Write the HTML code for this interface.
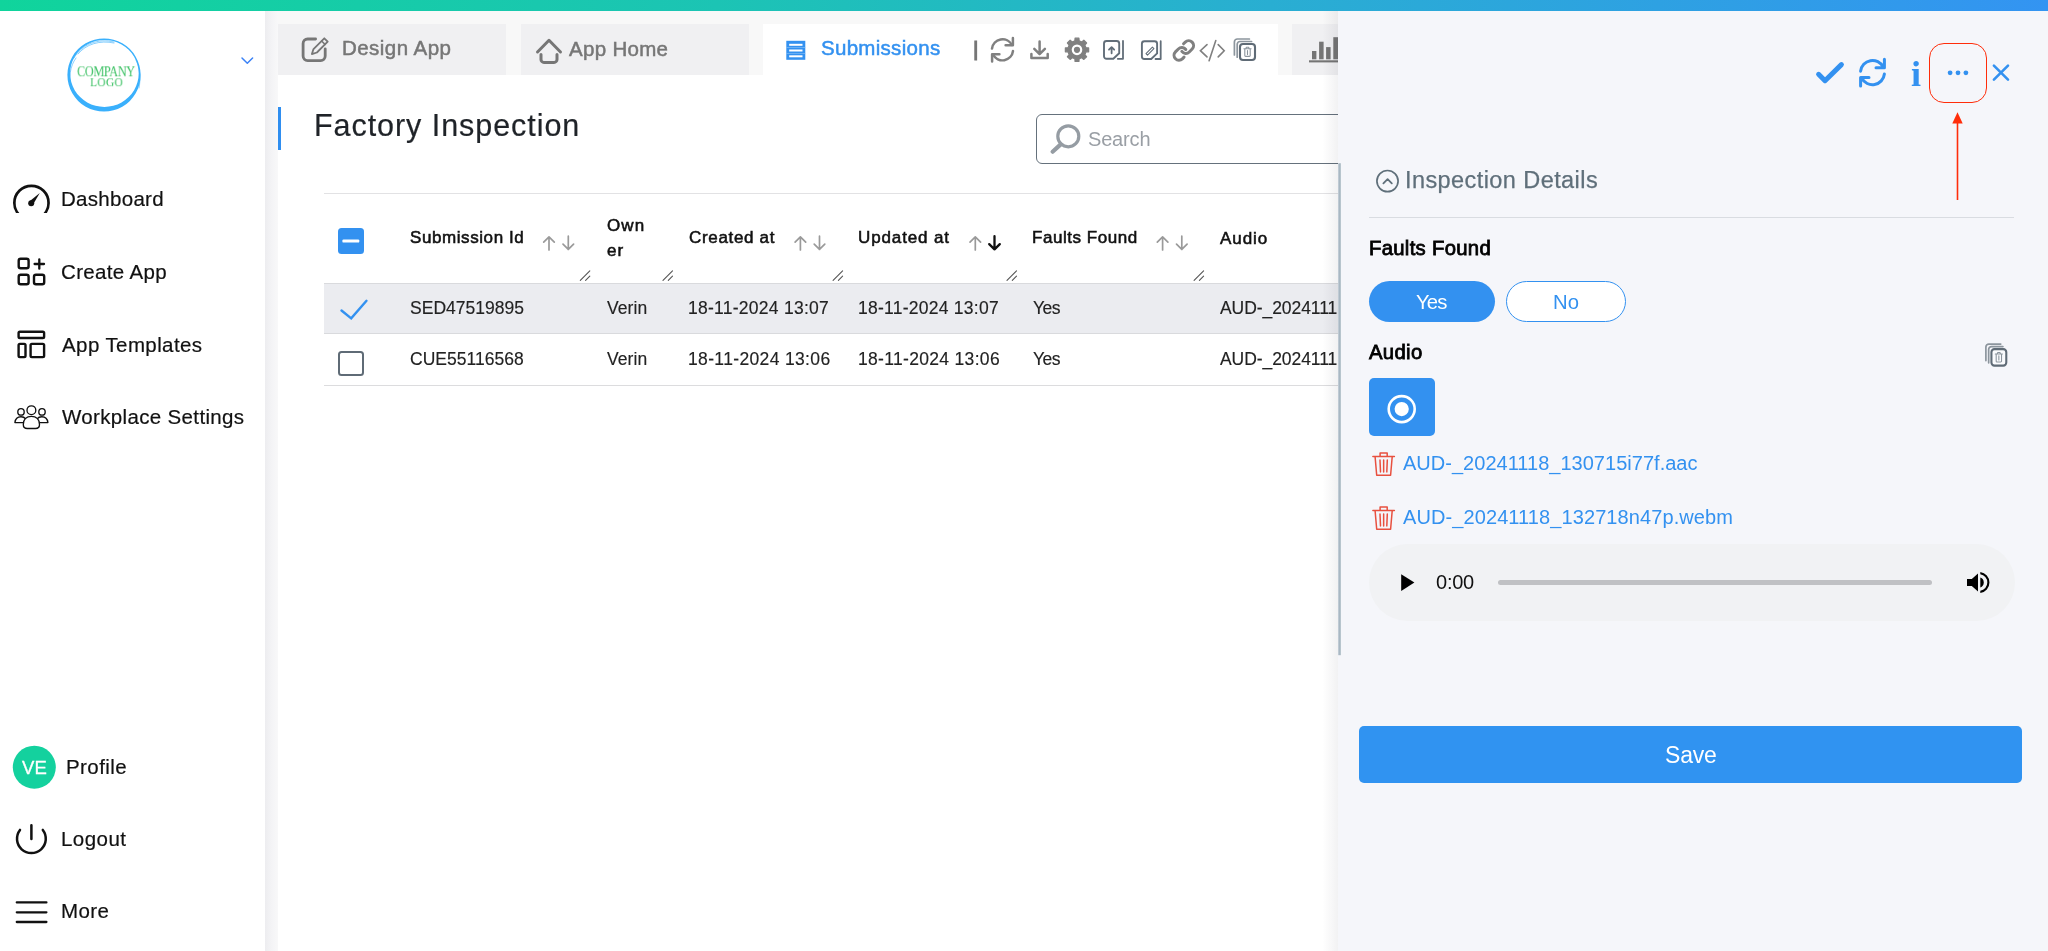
<!DOCTYPE html>
<html lang="en">
<head>
<meta charset="utf-8">
<title>Factory Inspection - Submissions</title>
<style>
html,body{margin:0;padding:0;}
body{width:2048px;height:951px;overflow:hidden;position:relative;background:#ffffff;font-family:"Liberation Sans",Arial,Helvetica,sans-serif;}
.abs{position:absolute;}
.t{position:absolute;white-space:nowrap;line-height:1;will-change:transform;}
svg.ov{position:absolute;left:0;top:0;width:2048px;height:951px;overflow:visible;}
#topbar{left:0;top:0;width:2048px;height:11px;background:linear-gradient(90deg,#10d49c 0%,#1cc4b4 35%,#29aed2 62%,#3394f2 100%);z-index:50;}
#sidebar{left:0;top:11px;width:265px;height:940px;background:#ffffff;}
#gutter{left:265px;top:11px;width:13px;height:940px;background:linear-gradient(90deg,#ededf0 0%,#f4f4f6 55%,#f8f8f9 100%);}
#mainbg{left:278px;top:11px;width:1060px;height:64px;background:#f8f8f8;}
#mainwhite{left:278px;top:75px;width:1060px;height:876px;background:#ffffff;}
.tab{top:24px;height:51.3px;background:#f0f0f2;}
#panel{left:1338px;top:11px;width:710px;height:940px;background:#f5f6fa;overflow:hidden;}
#main{left:0;top:0;width:1338px;height:951px;overflow:hidden;}
</style>
</head>
<body>
<div class="abs" id="main">
<div class="abs" id="sidebar"></div>
<div class="abs" id="gutter"></div>
<div class="abs" id="mainbg"></div>
<div class="abs" id="mainwhite"></div>

<div class="abs tab" style="left:278px;width:228px;"></div>
<div class="abs tab" style="left:521px;width:228px;"></div>
<div class="abs tab" style="left:763px;width:515px;background:#ffffff;"></div>
<div class="abs tab" style="left:1292px;width:60px;"></div>
<div class="abs" style="left:278px;top:107px;width:3px;height:43px;background:#2f8ef0;"></div>
<div class="abs" style="left:324px;top:193px;width:1020px;height:1px;background:#e2e2e4;"></div>
<div class="abs" style="left:1036px;top:114px;width:400px;height:48px;border:1.1px solid #65717c;border-radius:6px;background:#fff;"></div>
<div class="abs" style="left:324px;top:283px;width:1020px;height:51px;background:#ebecf0;border-top:1px solid #d9dadd;border-bottom:1px solid #d9dadd;box-sizing:border-box;"></div>
<div class="abs" style="left:324px;top:385px;width:1020px;height:1px;background:#dcdcde;"></div>
<div class="abs" style="left:338px;top:228px;width:26px;height:26px;border-radius:3.5px;background:#3391f0;"></div>
<div class="abs" style="left:338.2px;top:351.2px;width:25.6px;height:25.2px;border-radius:3.5px;border:2.4px solid #5f6b76;box-sizing:border-box;background:#fff;"></div>
<svg class="ov" viewBox="0 0 2048 951" fill="none" stroke-linecap="round" stroke-linejoin="round">
<rect x="342.400" y="239.400" width="16.900" height="3.200" rx="1.200" fill="#fff" stroke="none"/>
<!-- logo -->
<g stroke="none">
<path fill="#3ab0fc" fill-rule="evenodd" d="M104 38.4a36.6 36.6 0 1 0 0.01 0Z M104.4 39.9a34.3 33.5 0 1 1 -0.01 0Z"/>
<path fill="none" stroke="#3ab0fc" stroke-width="0.6" d="M74 58c8-14 24-20 40-16M78 54c8-10 22-14 36-11M72 90c-4-12-2-24 4-32M136 60c4 8 5 18 3 28"/>
</g>
<polyline points="242,58 247.3,63.2 252.6,58" stroke="#3b82f6" stroke-width="1.5"/>
<!-- dashboard -->
<clipPath id="cpd"><rect x="10" y="180" width="44" height="33"/></clipPath>
<g clip-path="url(#cpd)"><circle cx="31.45" cy="202.9" r="17.1" stroke="#111" stroke-width="2.7"/></g>
<circle cx="31.2" cy="203.2" r="3" fill="#111" stroke="none"/>
<path d="M29.6 201.2L39.8 193 33 204.4Z" fill="#111" stroke="none"/>
<!-- create app -->
<g stroke="#111" stroke-width="2.4">
<rect x="18.7" y="258.7" width="9.9" height="9.6" rx="2"/>
<rect x="18.7" y="274.7" width="9.9" height="9.6" rx="2"/>
<rect x="34" y="274.7" width="10.2" height="9.6" rx="2"/>
<path d="M34.600 264.000H44.000M39.300 259.300V268.700" stroke-width="2.300"/>
</g>
<!-- app templates -->
<g stroke="#111" stroke-width="2.4">
<rect x="18.6" y="331.8" width="25.5" height="6.2" rx="1.3"/>
<rect x="18.6" y="343.9" width="6.9" height="13.2" rx="1.3"/>
<rect x="30.6" y="343.9" width="13.5" height="13.2" rx="1.3"/>
</g>
<!-- workplace settings -->
<g stroke="#111" stroke-width="1.35" fill="#fff">
<circle cx="21" cy="411.9" r="3.2"/>
<circle cx="42" cy="411.9" r="3.2"/>
<path d="M14.9 422.6c0.4-3.6 2.6-5.9 6.1-5.9 2 0 3.6 0.8 4.6 2.2l-1.6 3.7Z"/>
<path d="M47.9 422.6c-0.4-3.6-2.6-5.9-6.1-5.9-2 0-3.6 0.8-4.6 2.2l1.600 3.700Z"/>
<circle cx="31.4" cy="410.2" r="4.4"/>
<path d="M23.300 424.500c0-5 3.200-8.200 8.100-8.200s8.100 3.200 8.100 8.200c0 2.500-1.500 4-4 4h-8.200c-2.500 0-4-1.500-4-4Z"/>
</g>
<!-- profile -->
<circle cx="34.3" cy="767.2" r="21.5" fill="#14d19e" stroke="none"/>
<!-- logout -->
<path d="M20.000 829.900A14.400 14.400 0 1 0 42.800 829.900M31.400 825.300V839" stroke="#111" stroke-width="2.5"/>
<!-- more -->
<path d="M16.800 902.400H46.400M16.800 912.300H46.400M16.800 922H46.400" stroke="#111" stroke-width="2.3"/>

<!-- design app icon -->
<g stroke="#767676">
<path d="M315.600 39.000H307.600a4.500 4.500 0 0 0-4.500 4.500v12.600a4.500 4.500 0 0 0 4.500 4.500h13.100a4.500 4.500 0 0 0 4.500-4.500V48.800" stroke-width="2.800"/>
<path d="M324.300 38.300l3.400 3.400-10.800 10.800-5 1.600 1.600-5Z" stroke-width="1.800"/>
<path d="M321.600 41.000l3.400 3.400" stroke-width="1.500"/>
</g>
<!-- home icon -->
<path d="M537.500 52.000L549 40.300 560.500 52.000" stroke="#767676" stroke-width="3"/>
<path d="M541.000 54.500V59.400a3 3 0 0 0 3 3H554a3 3 0 0 0 3-3V54.500" stroke="#767676" stroke-width="3"/>
<!-- submissions icon -->
<g stroke="none">
<rect x="786.300" y="40.800" width="19" height="19" fill="#3391f0"/>
<rect x="789.200" y="43.800" width="13.300" height="2" fill="#fff"/>
<rect x="789.200" y="49.500" width="13.300" height="2" fill="#fff"/>
<rect x="789.200" y="55.300" width="13.300" height="2" fill="#fff"/>
<rect x="786.300" y="47.300" width="19" height="0.600" fill="#8cc3f7"/>
<rect x="786.300" y="53.100" width="19" height="0.600" fill="#8cc3f7"/>
</g>
<!-- refresh -->
<g stroke="#808080" stroke-width="2.500">
<path d="M992.000 48.600A10.600 10.600 0 0 1 1011.900 44.900"/>
<path d="M1012.900 38.000V45.300H1005.600"/>
<path d="M1013.000 51.000A10.600 10.600 0 0 1 993.100 54.700"/>
<path d="M992.100 61.600V54.300H999.400"/>
</g>
<!-- download -->
<g stroke="#808080" stroke-width="2.500">
<path d="M1039.600 41.600V54.000M1034.300 48.900L1039.600 54.200 1044.900 48.900"/>
<path d="M1031.400 53.900V58.000H1047.700V53.900"/>
</g>
<!-- gear -->
<path d="M1085.95 47.70 L1088.64 47.91 L1088.64 51.79 L1085.95 52.00 L1084.84 54.66 L1086.60 56.71 L1083.86 59.45 L1081.81 57.69 L1079.15 58.80 L1078.94 61.49 L1075.06 61.49 L1074.85 58.80 L1072.19 57.69 L1070.14 59.45 L1067.40 56.71 L1069.16 54.66 L1068.05 52.00 L1065.36 51.79 L1065.36 47.91 L1068.05 47.70 L1069.16 45.04 L1067.40 42.99 L1070.14 40.25 L1072.19 42.01 L1074.85 40.90 L1075.06 38.21 L1078.94 38.21 L1079.15 40.90 L1081.81 42.01 L1083.86 40.25 L1086.60 42.99 L1084.84 45.04Z" fill="#808080" stroke="#808080" stroke-width="1.200"/>
<circle cx="1077" cy="49.850" r="5.300" fill="#fff" stroke="none"/>
<circle cx="1077" cy="49.850" r="3.100" fill="#808080" stroke="none"/>
<!-- file upload -->
<g stroke="#626e79" stroke-width="1.9">
<path d="M1106.500 41.000H1116.700a2.500 2.500 0 0 1 2.500 2.500V53.200L1113.300 58.800H1106.500a2.500 2.500 0 0 1-2.500-2.500V43.500a2.500 2.500 0 0 1 2.500-2.500Z"/>
<path d="M1123.000 41.000V58.800H1117.800" stroke-width="1.800"/>
<path d="M1111.600 53.300V47.400M1109.000 49.700L1111.600 47.100 1114.200 49.700" stroke-width="1.800"/>
</g>
<!-- file edit -->
<g stroke="#626e79" stroke-width="1.9">
<path d="M1144.400 41.200H1154.600a2.500 2.500 0 0 1 2.500 2.500V53.400L1151.200 59.000H1144.400a2.500 2.500 0 0 1-2.500-2.500V43.700a2.500 2.500 0 0 1 2.500-2.500Z"/>
<path d="M1160.700 41.200V59.000H1155.500" stroke-width="1.800"/>
<path d="M1146.000 53.600L1152.400 47.200 1153.900 48.700 1147.500 55.100Z" stroke-width="1.100"/>
</g>
<!-- link -->
<g stroke="#808080" stroke-width="3.100" transform="translate(1172.050 38.700) scale(0.980)">
<path d="M10 13a5 5 0 0 0 7.540.540l3-3a5 5 0 0 0-7.070-7.070l-1.720 1.710"/>
<path d="M14 11a5 5 0 0 0-7.540-.540l-3 3a5 5 0 0 0 7.070 7.070l1.710-1.710"/>
</g>
<!-- code -->
<g stroke="#808080" stroke-width="1.600" stroke-linejoin="miter">
<path d="M1207.000 44.600L1200.400 50.700 1207.000 56.900M1215.800 40.500L1209.100 60.800M1218.200 44.600L1224.200 50.700 1218.200 56.900"/>
</g>
<!-- bulk trash (toolbar) -->
<g transform="translate(1233.400 38.000)">
<path d="M1 17.000V4.000A3 3 0 0 1 4 1H16" stroke="#8c959d" stroke-width="1.700"/>
<path d="M3.800 19.200V6.300A2.800 2.800 0 0 1 6.600 3.500H18.200" stroke="#8c959d" stroke-width="1.700"/>
<rect x="6.600" y="6.000" width="15" height="16" rx="3" stroke="#5f6b76" stroke-width="2.100" fill="#fff"/>
<path d="M10.500 10.700H17.700M12.500 10.400L13 9.200H15.200L15.700 10.400M11.400 11.200V17.600a.8.800 0 0 0 .8.800H16a.8.800 0 0 0 .8-.8V11.200M14.100 12.500V16.500" stroke="#8c959d" stroke-width="1.100"/>
</g>
<!-- bar chart -->
<g stroke="none" fill="#757575">
<rect x="1312.000" y="51.000" width="4.400" height="8.300"/>
<rect x="1319.100" y="41.700" width="4.500" height="17.600"/>
<rect x="1326.100" y="47.100" width="4.500" height="12.200"/>
<rect x="1333.300" y="37.200" width="4.700" height="22.100"/>
<rect x="1309.000" y="60.300" width="30" height="2.100"/>
</g>
<!-- search -->
<g stroke="#959ca3">
<circle cx="1068.300" cy="136.300" r="10.500" stroke-width="3.200"/>
<path d="M1060.700 144.400L1052.600 151.700" stroke-width="4.200"/>
</g>

<!-- table icons -->
<path d="M549.0 250.0V236.8M543.7 242.1L549.0 236.8 554.3 242.1" stroke="#9a9a9a" stroke-width="1.7"/>
<path d="M568.3 236.2V249.4M563.0 244.1L568.3 249.4 573.6 244.1" stroke="#9a9a9a" stroke-width="1.7"/>
<path d="M800.4 250.0V236.8M795.1 242.1L800.4 236.8 805.7 242.1" stroke="#9a9a9a" stroke-width="1.7"/>
<path d="M819.5 236.2V249.4M814.2 244.1L819.5 249.4 824.8 244.1" stroke="#9a9a9a" stroke-width="1.7"/>
<path d="M975.3 250.0V236.8M970.0 242.1L975.3 236.8 980.6 242.1" stroke="#9a9a9a" stroke-width="1.7"/>
<path d="M994.5 236.2V249.4M989.2 244.1L994.5 249.4 999.8 244.1" stroke="#111" stroke-width="2.3"/>
<path d="M1162.6 250.0V236.8M1157.3 242.1L1162.6 236.8 1167.9 242.1" stroke="#9a9a9a" stroke-width="1.7"/>
<path d="M1181.8 236.2V249.4M1176.5 244.1L1181.8 249.4 1187.1 244.1" stroke="#9a9a9a" stroke-width="1.7"/>
<path d="M580.3 280.3L589.8 270.8M585.6 280.3L589.8 276.1" stroke="#555" stroke-width="1.1"/>
<path d="M663.0 280.3L672.5 270.8M668.3 280.3L672.5 276.1" stroke="#555" stroke-width="1.1"/>
<path d="M833.1 280.3L842.6 270.8M838.4 280.3L842.6 276.1" stroke="#555" stroke-width="1.1"/>
<path d="M1007.0 280.3L1016.5 270.8M1012.3 280.3L1016.5 276.1" stroke="#555" stroke-width="1.1"/>
<path d="M1194.1 280.3L1203.6 270.8M1199.4 280.3L1203.6 276.1" stroke="#555" stroke-width="1.1"/>
<path d="M341.500 310.500L351.200 318.400 366.500 300.800" stroke="#3391f0" stroke-width="2.400" stroke-linejoin="miter"/>

</svg>
<span class="t" style='left:61.20px;top:189.00px;font-size:20.5px;color:#111111;letter-spacing:0.289px;-webkit-text-stroke:0.2px #111111;transform:translateY(-0.20px);transform-origin:0 0;'>Dashboard</span>
<span class="t" style='left:61.20px;top:262.00px;font-size:20.5px;color:#111111;letter-spacing:0.333px;-webkit-text-stroke:0.2px #111111;transform:translateY(-0.30px);transform-origin:0 0;'>Create App</span>
<span class="t" style='left:61.80px;top:335.00px;font-size:20.5px;color:#111111;letter-spacing:0.404px;-webkit-text-stroke:0.2px #111111;transform:translateY(-0.50px);transform-origin:0 0;'>App Templates</span>
<span class="t" style='left:61.80px;top:407.00px;font-size:20.5px;color:#111111;letter-spacing:0.342px;-webkit-text-stroke:0.2px #111111;'>Workplace Settings</span>
<span class="t" style='left:66.40px;top:757.00px;font-size:20.5px;color:#111111;letter-spacing:0.416px;-webkit-text-stroke:0.2px #111111;transform:translateY(-0.30px);transform-origin:0 0;'>Profile</span>
<span class="t" style='left:61.30px;top:829.00px;font-size:20.5px;color:#111111;letter-spacing:0.459px;-webkit-text-stroke:0.2px #111111;transform:translateY(-0.30px);transform-origin:0 0;'>Logout</span>
<span class="t" style='left:61.30px;top:901.00px;font-size:20.5px;color:#111111;letter-spacing:0.365px;-webkit-text-stroke:0.2px #111111;transform:translateY(0.20px);transform-origin:0 0;'>More</span>
<span class="t" style='left:21.60px;top:759.00px;font-size:18.5px;color:#ffffff;letter-spacing:0.061px;-webkit-text-stroke:0.3px #ffffff;transform:translateY(-0.40px);transform-origin:0 0;'>VE</span>
<span class="t" style='left:76.70px;top:63.00px;font-size:15.5px;color:#3fc266;letter-spacing:-0.566px;font-family:"Liberation Serif", "Times New Roman", serif;transform:translateY(0.30px) scaleX(0.8);transform-origin:0 0;'>COMPANY</span>
<span class="t" style='left:89.60px;top:75.00px;font-size:13.5px;color:#3fc266;letter-spacing:0.360px;font-family:"Liberation Serif", "Times New Roman", serif;transform:translateY(0.20px) scaleX(0.85);transform-origin:0 0;'>LOGO</span>
<span class="t" style='left:341.60px;top:38.00px;font-size:20.5px;color:#767676;letter-spacing:0.458px;-webkit-text-stroke:0.5px #767676;transform:translateY(0.40px);transform-origin:0 0;'>Design App</span>
<span class="t" style='left:569.40px;top:39.00px;font-size:20.5px;color:#767676;letter-spacing:0.307px;-webkit-text-stroke:0.5px #767676;transform:translateY(-0.40px);transform-origin:0 0;'>App Home</span>
<span class="t" style='left:820.70px;top:38.00px;font-size:20.5px;color:#3391f0;letter-spacing:0.294px;-webkit-text-stroke:0.5px #3391f0;transform:translateY(0.40px);transform-origin:0 0;'>Submissions</span>
<span class="t" style='left:314.00px;top:110.00px;font-size:30.5px;color:#1f2328;letter-spacing:0.945px;-webkit-text-stroke:0.2px #1f2328;'>Factory Inspection</span>
<span class="t" style='left:1088.00px;top:129.00px;font-size:20px;color:#9a9fa5;letter-spacing:-0.169px;'>Search</span>
<span class="t" style='left:409.60px;top:228.00px;font-size:17px;color:#111111;letter-spacing:0.582px;-webkit-text-stroke:0.55px #111111;transform:translateY(0.50px);transform-origin:0 0;'>Submission Id</span>
<span class="t" style='left:606.50px;top:217.00px;font-size:17px;color:#111111;letter-spacing:1.150px;-webkit-text-stroke:0.55px #111111;transform:translateY(-0.30px);transform-origin:0 0;white-space:normal;word-break:break-all;width:44px;line-height:25.4px;margin-top:-3.9px;'>Owner</span>
<span class="t" style='left:689.00px;top:229.00px;font-size:17px;color:#111111;letter-spacing:0.671px;-webkit-text-stroke:0.55px #111111;transform:translateY(-0.40px);transform-origin:0 0;'>Created at</span>
<span class="t" style='left:858.10px;top:229.00px;font-size:17px;color:#111111;letter-spacing:0.872px;-webkit-text-stroke:0.55px #111111;transform:translateY(-0.40px);transform-origin:0 0;'>Updated at</span>
<span class="t" style='left:1031.90px;top:229.00px;font-size:17px;color:#111111;letter-spacing:0.540px;-webkit-text-stroke:0.55px #111111;transform:translateY(-0.40px);transform-origin:0 0;'>Faults Found</span>
<span class="t" style='left:1220.40px;top:230.00px;font-size:17px;color:#111111;letter-spacing:0.919px;-webkit-text-stroke:0.55px #111111;'>Audio</span>
<span class="t" style='left:410.00px;top:300.00px;font-size:17.5px;color:#222222;letter-spacing:0.019px;-webkit-text-stroke:0.15px #222222;transform:translateY(-0.30px);transform-origin:0 0;'>SED47519895</span>
<span class="t" style='left:607.10px;top:300.00px;font-size:17.5px;color:#222222;letter-spacing:0.061px;-webkit-text-stroke:0.15px #222222;transform:translateY(-0.30px);transform-origin:0 0;'>Verin</span>
<span class="t" style='left:688.00px;top:300.00px;font-size:17.5px;color:#222222;letter-spacing:0.264px;-webkit-text-stroke:0.15px #222222;transform:translateY(-0.30px);transform-origin:0 0;'>18-11-2024 13:07</span>
<span class="t" style='left:858.10px;top:300.00px;font-size:17.5px;color:#222222;letter-spacing:0.251px;-webkit-text-stroke:0.15px #222222;transform:translateY(-0.30px);transform-origin:0 0;'>18-11-2024 13:07</span>
<span class="t" style='left:1033.20px;top:300.00px;font-size:17.5px;color:#222222;letter-spacing:-0.499px;-webkit-text-stroke:0.15px #222222;transform:translateY(-0.30px);transform-origin:0 0;'>Yes</span>
<span class="t" style='left:1220.40px;top:300.00px;font-size:17.5px;color:#222222;letter-spacing:-0.064px;-webkit-text-stroke:0.15px #222222;transform:translateY(-0.30px);transform-origin:0 0;'>AUD-_20241118_130715i77f.aac</span>
<span class="t" style='left:410.00px;top:351.00px;font-size:17.5px;color:#222222;letter-spacing:0.012px;-webkit-text-stroke:0.15px #222222;transform:translateY(-0.40px);transform-origin:0 0;'>CUE55116568</span>
<span class="t" style='left:607.10px;top:351.00px;font-size:17.5px;color:#222222;letter-spacing:0.061px;-webkit-text-stroke:0.15px #222222;transform:translateY(-0.40px);transform-origin:0 0;'>Verin</span>
<span class="t" style='left:688.00px;top:351.00px;font-size:17.5px;color:#222222;letter-spacing:0.351px;-webkit-text-stroke:0.15px #222222;transform:translateY(-0.40px);transform-origin:0 0;'>18-11-2024 13:06</span>
<span class="t" style='left:858.10px;top:351.00px;font-size:17.5px;color:#222222;letter-spacing:0.317px;-webkit-text-stroke:0.15px #222222;transform:translateY(-0.40px);transform-origin:0 0;'>18-11-2024 13:06</span>
<span class="t" style='left:1033.20px;top:351.00px;font-size:17.5px;color:#222222;letter-spacing:-0.499px;-webkit-text-stroke:0.15px #222222;transform:translateY(-0.40px);transform-origin:0 0;'>Yes</span>
<span class="t" style='left:1220.40px;top:351.00px;font-size:17.5px;color:#222222;letter-spacing:-0.064px;-webkit-text-stroke:0.15px #222222;transform:translateY(-0.40px);transform-origin:0 0;'>AUD-_20241118_130715i77f.aac</span>
<span class="t" style="left:972.7px;top:37.9px;font-size:21px;color:#767676;-webkit-text-stroke:1.1px #767676;">|</span>


<div class="abs" style="left:1322px;top:11px;width:16px;height:940px;background:linear-gradient(90deg,rgba(20,20,40,0),rgba(20,20,40,0.055));"></div>
</div>
<div class="abs" id="panel"></div>

<div class="abs" style="left:1369px;top:217px;width:645px;height:1px;background:#d9dce1;"></div>
<div class="abs" style="left:1369px;top:281px;width:126px;height:41px;border-radius:21px;background:#3391f0;"></div>
<div class="abs" style="left:1506px;top:281px;width:120px;height:41px;border-radius:21px;background:#ffffff;border:1.4px solid #3391f0;box-sizing:border-box;"></div>
<div class="abs" style="left:1369px;top:378px;width:66px;height:58px;border-radius:5px;background:#3391f0;"></div>
<div class="abs" style="left:1369px;top:543.6px;width:646px;height:77.2px;border-radius:39px;background:#f1f2f4;"></div>
<div class="abs" style="left:1498px;top:579.8px;width:434.3px;height:5.6px;border-radius:3px;background:#c0c1c4;"></div>
<div class="abs" style="left:1359px;top:726px;width:663.4px;height:57px;border-radius:5px;background:#3093f1;"></div>
<div class="abs" style="left:1929.4px;top:42.8px;width:57.6px;height:60px;border-radius:15px;border:1.7px solid #ff2d0a;box-sizing:border-box;"></div>
<svg class="ov" viewBox="0 0 2048 951" fill="none" stroke-linecap="round" stroke-linejoin="round">
<rect x="1338.300" y="163.200" width="2.500" height="492" fill="#a9b8c3" stroke="none"/>
<!-- check -->
<path d="M1818.600 74.300L1825.000 80.700 1841.400 64.600" stroke="#3391f0" stroke-width="5"/>
<!-- refresh blue -->
<g stroke="#3391f0" stroke-width="3">
<path d="M1860.600 71.200A12 12 0 0 1 1883.200 67.000"/>
<path d="M1884.400 59.300V67.700H1876.000"/>
<path d="M1884.400 74.000A12 12 0 0 1 1861.800 78.200"/>
<path d="M1860.600 85.900V77.500H1869.000"/>
</g>
<!-- dots -->
<g fill="#3391f0" stroke="none"><circle cx="1950.100" cy="72.800" r="2.400"/><circle cx="1958.000" cy="72.800" r="2.400"/><circle cx="1965.900" cy="72.800" r="2.400"/></g>
<!-- close -->
<path d="M1993.900 65.600L2008.000 79.700M2008.000 65.600L1993.900 79.700" stroke="#3391f0" stroke-width="2.600"/>
<!-- arrow -->
<path d="M1957.500 200.000V122.000" stroke="#ff2d0a" stroke-width="1.600" stroke-linecap="butt"/>
<path d="M1957.500 112.300L1962.700 123.600H1952.300Z" fill="#ff2d0a" stroke="none"/>
<!-- circle chevron -->
<circle cx="1387.500" cy="181.100" r="10.600" stroke="#5f6f7a" stroke-width="1.700"/>
<path d="M1383.400 183.300L1387.600 179.100 1391.800 183.300" stroke="#5f6f7a" stroke-width="1.800"/>
<!-- record -->
<circle cx="1401.700" cy="409.100" r="13" stroke="#fff" stroke-width="2.600"/>
<circle cx="1401.700" cy="409.100" r="7.100" fill="#fff" stroke="none"/>
<!-- bulk trash (panel) -->
<g transform="translate(1984.900 343.000) scale(0.990 1.030)">
<path d="M1 17.000V4.000A3 3 0 0 1 4 1H16" stroke="#8c959d" stroke-width="1.700"/>
<path d="M3.800 19.200V6.300A2.800 2.800 0 0 1 6.600 3.500H18.200" stroke="#8c959d" stroke-width="1.700"/>
<rect x="6.600" y="6.000" width="15" height="16" rx="3" stroke="#5f6b76" stroke-width="2.100" fill="#fafbfd"/>
<path d="M10.500 10.700H17.700M12.500 10.400L13 9.200H15.200L15.700 10.400M11.400 11.200V17.600a.8.800 0 0 0 .8.800H16a.8.800 0 0 0 .8-.8V11.200M14.100 12.500V16.500" stroke="#8c959d" stroke-width="1.100"/>
</g>
<g transform="translate(1372.1 452.1)" stroke="#e8503f" stroke-width="1.500"><path d="M0.800 4.400H22.300"/><path d="M8.000 4.200V1.000H15.100V4.200"/><path d="M3.000 4.600L4.600 23.200H18.500L20.100 4.600"/><path d="M7.900 8.000L8.400 19.800M11.550 8.000V19.800M15.200 8.000L14.700 19.800"/></g>
<g transform="translate(1372.1 506.1)" stroke="#e8503f" stroke-width="1.500"><path d="M0.800 4.400H22.300"/><path d="M8.000 4.200V1.000H15.100V4.200"/><path d="M3.000 4.600L4.600 23.200H18.500L20.100 4.600"/><path d="M7.900 8.000L8.400 19.800M11.550 8.000V19.800M15.200 8.000L14.700 19.800"/></g>

<!-- play -->
<path d="M1401.200 574.300L1414.400 582.600 1401.200 590.900Z" fill="#000" stroke="none"/>
<!-- volume -->
<g fill="#000" stroke="none">
<path d="M1967.000 579.000H1971.800L1978.000 573.400V591.600L1971.800 586.000H1967.000Z"/>
<path d="M1980.300 577.600A5.200 5.200 0 0 1 1980.300 587.400Z"/>
<path d="M1980.300 572.000A10.600 10.600 0 0 1 1980.300 593.000V590.700A8.300 8.300 0 0 0 1980.300 574.300Z"/>
</g>
</svg>
<span class="t" style='left:1405.20px;top:169.00px;font-size:23.5px;color:#5f6f7a;letter-spacing:0.421px;-webkit-text-stroke:0.25px #5f6f7a;transform:translateY(-0.50px);transform-origin:0 0;'>Inspection Details</span>
<span class="t" style='left:1368.50px;top:238.00px;font-size:20.3px;color:#000000;letter-spacing:0.301px;-webkit-text-stroke:0.8px #000000;transform:translateY(-0.40px);transform-origin:0 0;'>Faults Found</span>
<span class="t" style='left:1416.10px;top:292.00px;font-size:20.3px;color:#ffffff;letter-spacing:-0.822px;transform:translateY(-0.30px);transform-origin:0 0;'>Yes</span>
<span class="t" style='left:1552.80px;top:292.00px;font-size:20.3px;color:#3391f0;letter-spacing:0.054px;transform:translateY(-0.30px);transform-origin:0 0;'>No</span>
<span class="t" style='left:1369.10px;top:342.00px;font-size:20.3px;color:#000000;letter-spacing:0.327px;-webkit-text-stroke:0.8px #000000;transform:translateY(-0.40px);transform-origin:0 0;'>Audio</span>
<span class="t" style='left:1403.40px;top:453.00px;font-size:20px;color:#3391f0;letter-spacing:0.021px;transform:translateY(-0.30px);transform-origin:0 0;'>AUD-_20241118_130715i77f.aac</span>
<span class="t" style='left:1403.40px;top:507.00px;font-size:20px;color:#3391f0;letter-spacing:0.096px;transform:translateY(-0.40px);transform-origin:0 0;'>AUD-_20241118_132718n47p.webm</span>
<span class="t" style='left:1436.40px;top:572.00px;font-size:20px;color:#111111;letter-spacing:-0.234px;transform:translateY(0.40px);transform-origin:0 0;'>0:00</span>
<span class="t" style='left:1664.90px;top:744.00px;font-size:23px;color:#ffffff;letter-spacing:-0.177px;transform:translateY(-0.30px);transform-origin:0 0;'>Save</span>
<span class="t" style='left:1910.70px;top:56.00px;font-size:36px;color:#3391f0;font-weight:700;font-family:"Liberation Serif", "Times New Roman", serif;transform:translateY(-0.50px);transform-origin:0 0;'>i</span>

<div class="abs" id="topbar"></div>
</body>
</html>
